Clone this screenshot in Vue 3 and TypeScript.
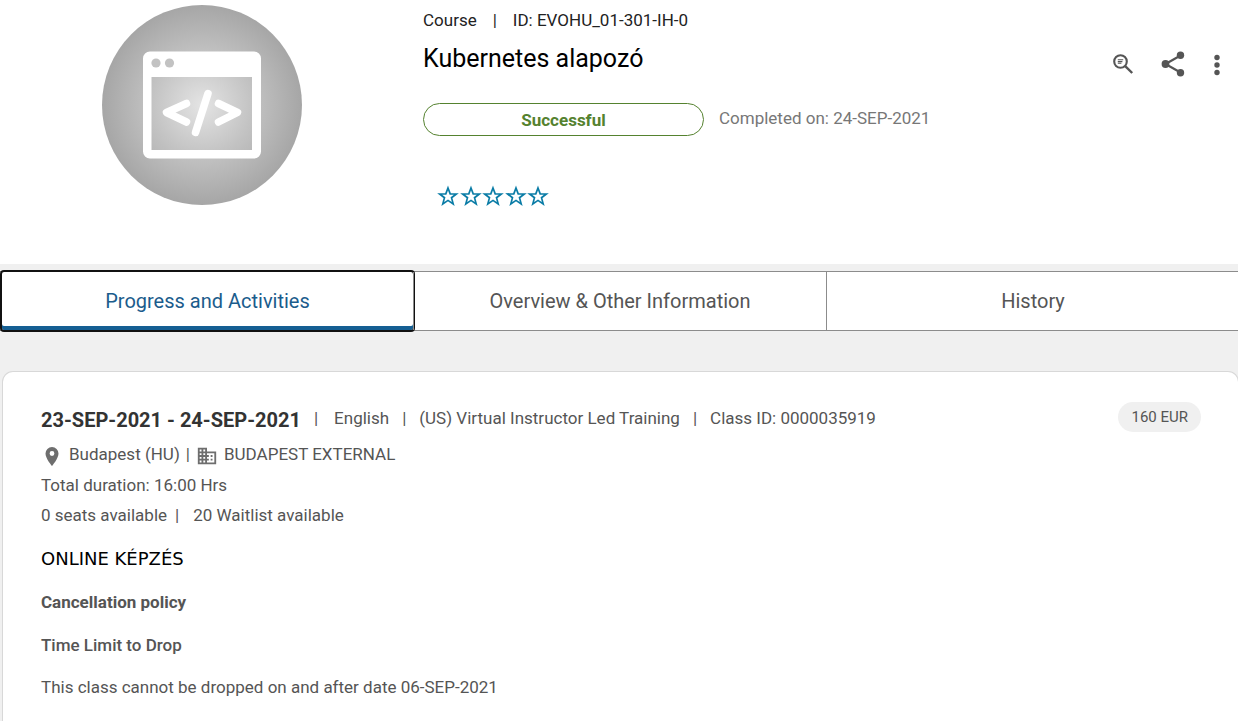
<script setup lang="ts">
import { ref } from 'vue'

const tabs: string[] = ['Progress and Activities', 'Overview & Other Information', 'History']
const activeTab = ref(0)
const stars: number[] = [1, 2, 3, 4, 5]
const rating = ref(0)
</script>

<template>
  <div class="page">
    <header class="course">
      <div class="media">
        <svg class="thumb" viewBox="0 0 200 200" role="img" aria-label="Course">
          <defs>
            <radialGradient id="disc" cx="50%" cy="50%" r="50%">
              <stop offset="0" stop-color="#e4e4e4" />
              <stop offset="0.5" stop-color="#c3c3c3" />
              <stop offset="1" stop-color="#a6a6a6" />
            </radialGradient>
          </defs>
          <circle cx="100" cy="100" r="100" fill="url(#disc)" />
          <path fill="#fff" fill-rule="evenodd" d="M48 46.500h104a7 7 0 0 1 7 7v93a7 7 0 0 1-7 7H48a7 7 0 0 1-7-7v-93a7 7 0 0 1 7-7zM49.500 72v73H150V72z" />
          <circle cx="54" cy="58" r="4.600" fill="#c2c2c2" />
          <circle cx="67.500" cy="58" r="4.600" fill="#c2c2c2" />
          <path fill="none" stroke="#fff" stroke-width="7.500" stroke-linecap="round" stroke-linejoin="round" d="M84.500 98.500L64.500 107.500L84.500 117M106 88.500L93.500 127.500M116.500 98.500L135.500 107.500L116.500 117" />
        </svg>
      </div>

      <div class="summary">
        <p class="meta"><span>Course</span><span>|</span><span>ID: EVOHU_01-301-IH-0</span></p>
        <h1>Kubernetes alapozó</h1>
        <div class="status">
          <span class="pill">Successful</span>
          <span class="completed">Completed on: 24-SEP-2021</span>
        </div>
        <div class="rating">
          <button v-for="n in stars" :key="n" type="button" :aria-label="`Rate ${n}`" @click="rating = n">
            <svg viewBox="0 0 22 22" width="22" height="22">
              <path :fill="n <= rating ? '#0a7ca6' : 'none'" stroke="#0a7ca6" stroke-width="1.700" d="M11 3L13.200 8.800L19.400 9L14.500 12.700L16.200 18.900L11 15.400L5.800 18.900L7.500 12.700L2.600 9L8.800 8.800Z" />
            </svg>
          </button>
        </div>
      </div>

      <div class="actions">
        <button type="button" aria-label="Find details">
          <svg viewBox="0 0 24 24" width="24" height="24" fill="none" stroke="#555">
            <circle cx="9.500" cy="9.500" r="6.300" stroke-width="2.100" />
            <path stroke-width="2.400" d="M14.200 14.200L21.200 21" />
            <path stroke-width="1.100" d="M6.800 7.700h5.400M6.800 9.600h4.600M6.800 11.300h3.600" />
          </svg>
        </button>
        <button type="button" aria-label="Share">
          <svg viewBox="0 0 26 26" width="26" height="26">
            <path fill="none" stroke="#555" stroke-width="2.200" d="M19.500 4.500L4.500 13L19.500 21.500" />
            <g fill="#555">
              <circle cx="19.500" cy="4.300" r="3.700" />
              <circle cx="4.500" cy="13" r="3.900" />
              <circle cx="19.500" cy="21.700" r="3.700" />
            </g>
          </svg>
        </button>
        <button type="button" aria-label="More options">
          <svg viewBox="0 0 8 24" width="8" height="24" fill="#555">
            <circle cx="4" cy="5.500" r="2.700" />
            <circle cx="4" cy="13" r="2.700" />
            <circle cx="4" cy="20.500" r="2.700" />
          </svg>
        </button>
      </div>
    </header>

    <nav class="tabs" role="tablist">
      <button
        v-for="(tab, i) in tabs"
        :key="tab"
        type="button"
        role="tab"
        :aria-selected="activeTab === i"
        :class="{ active: activeTab === i }"
        @click="activeTab = i"
      >{{ tab }}</button>
    </nav>

    <main class="card">
      <div class="top">
        <div class="session">
          <h2>23-SEP-2021 - 24-SEP-2021</h2>
          <span>|</span>
          <span class="language">English</span>
          <span>|</span>
          <span>(US) Virtual Instructor Led Training</span>
          <span>|</span>
          <span>Class ID: 0000035919</span>
        </div>
        <span class="price">160 EUR</span>
      </div>
      <p class="place">
        <svg viewBox="0 0 22 22" width="22" height="22">
          <path fill="#6e6e6e" fill-rule="evenodd" d="M11 2a6.500 6.500 0 0 0-6.500 6.500C4.500 13.500 11 21 11 21s6.500-7.500 6.500-12.500A6.500 6.500 0 0 0 11 2zm0 4.100a2.400 2.400 0 1 1 0 4.800a2.400 2.400 0 0 1 0-4.800z" />
        </svg>
        <span>Budapest (HU)</span>
        <span>|</span>
        <svg viewBox="0 0 24 24" width="22" height="22">
          <path fill="#6e6e6e" d="M12 7V3H2v18h20V7H12zM6 19H4v-2h2v2zm0-4H4v-2h2v2zm0-4H4V9h2v2zm0-4H4V5h2v2zm4 12H8v-2h2v2zm0-4H8v-2h2v2zm0-4H8V9h2v2zm0-4H8V5h2v2zm10 12h-8v-2h2v-2h-2v-2h2v-2h-2V9h8v10zm-2-8h-2v2h2v-2zm0 4h-2v2h2v-2z" />
        </svg>
        <span>BUDAPEST EXTERNAL</span>
      </p>
      <p class="duration">Total duration: 16:00 Hrs</p>
      <p class="seats"><span>0 seats available</span><span>|</span><span class="waitlist">20 Waitlist available</span></p>
      <p class="notice">ONLINE KÉPZÉS</p>
      <h3>Cancellation policy</h3>
      <h3 class="limit">Time Limit to Drop</h3>
      <p>This class cannot be dropped on and after date 06-SEP-2021</p>
    </main>
  </div>
</template>

<style>
body {
  background: #f0f0f0;
}
</style>

<style scoped>
.page {
  display: flex;
  flex-direction: column;
  min-height: 100vh;
  overflow: hidden;
  font-family: Roboto, "Liberation Sans", sans-serif;
  font-size: 17px;
  line-height: 30px;
  color: #555;
}
p, h1, h2, h3 {
  margin: 0;
}
button {
  padding: 0;
  border: 0;
  background: none;
  font: inherit;
  color: inherit;
  cursor: pointer;
}
svg {
  display: block;
  flex: none;
}
.course {
  display: flex;
  padding: 5px 17px 57px 0;
  background: #fff;
}
.media {
  display: flex;
  justify-content: center;
  width: 404px;
  flex: none;
}
.thumb {
  width: 200px;
  height: 200px;
}
.summary {
  flex: 1;
  padding-left: 19px;
}
.meta {
  display: flex;
  gap: 16px;
  color: #222;
}
h1 {
  margin-top: 9px;
  font-size: 25px;
  font-weight: 400;
  color: #000;
}
.status {
  display: flex;
  align-items: center;
  gap: 15px;
  margin-top: 29px;
}
.pill {
  box-sizing: border-box;
  width: 281px;
  height: 33px;
  border: 1px solid #55822f;
  border-radius: 17px;
  text-align: center;
  line-height: 32px;
  font-weight: 700;
  color: #55822f;
}
.completed {
  padding-bottom: 3px;
  color: #777;
}
.rating {
  display: grid;
  grid-template-columns: repeat(5, 1fr);
  width: 113px;
  margin-top: 49px;
  padding-left: 14px;
}
.actions {
  display: flex;
  align-items: center;
  gap: 26px;
  height: 24px;
  margin-top: 47px;
}
.tabs {
  display: grid;
  grid-template-columns: repeat(3, 1fr);
  margin: 7px -1px 0 0;
  border-top: 1px solid #8c8c8c;
  border-bottom: 1px solid #8c8c8c;
  background: #fff;
}
.tabs button {
  height: 58px;
  border-left: 1px solid #8c8c8c;
  font-size: 20px;
}
.tabs .active {
  border-left: 0;
  border-radius: 2px;
  color: #1b5c8c;
  box-shadow: inset 0 -4px #155f93;
  outline: 2px solid #111;
}
.tabs button:first-child.active {
  margin-left: 2px;
}
.card {
  flex: 1;
  margin: 40px -1px 0 2px;
  padding: 30px 37px 10px 38px;
  border: 1px solid #d8d8d8;
  border-bottom: 0;
  border-radius: 11px 11px 0 0;
  background: #fff;
}
.top {
  display: flex;
  justify-content: space-between;
  align-items: flex-start;
}
.session {
  display: flex;
  gap: 13px;
  line-height: 32px;
}
h2 {
  font-size: 20px;
  font-weight: 700;
  line-height: 36px;
  color: #333;
}
.language {
  padding-left: 3px;
}
.price {
  padding: 0 13px;
  border-radius: 15px;
  background: #f0f0f0;
  font-size: 15px;
}
.place {
  display: flex;
  gap: 6px;
  margin-top: 1px;
}
.place svg {
  margin-top: 6px;
}
.duration {
  margin-top: 1px;
}
.seats {
  display: flex;
  gap: 8px;
}
.waitlist {
  padding-left: 6px;
}
.notice {
  margin-top: 14px;
  font-family: "DejaVu Sans", "Noto Sans", sans-serif;
  font-size: 18px;
  color: #000;
}
h3 {
  margin: 13px 0;
  font-size: 17px;
  font-weight: 700;
}
.limit {
  margin-bottom: 12px;
  font-weight: 500;
}
</style>
